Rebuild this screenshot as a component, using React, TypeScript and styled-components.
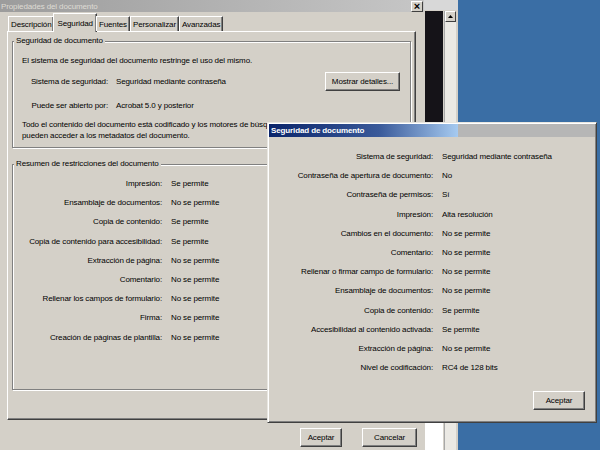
import { Fragment } from 'react';
import styled, { createGlobalStyle } from 'styled-components';

const GlobalStyle = createGlobalStyle`
  html, body {
    margin: 0;
    padding: 0;
  }
  body {
    font-family: 'Liberation Sans', Arial, sans-serif;
    font-size: 8px;
    letter-spacing: -0.12px;
    color: #000;
  }
`;

const summary = [
  ['Impresión:', 'Se permite'],
  ['Ensamblaje de documentos:', 'No se permite'],
  ['Copia de contenido:', 'Se permite'],
  ['Copia de contenido para accesibilidad:', 'Se permite'],
  ['Extracción de página:', 'No se permite'],
  ['Comentario:', 'No se permite'],
  ['Rellenar los campos de formulario:', 'No se permite'],
  ['Firma:', 'No se permite'],
  ['Creación de páginas de plantilla:', 'No se permite'],
];

const details = [
  ['Sistema de seguridad:', 'Seguridad mediante contraseña'],
  ['Contraseña de apertura de documento:', 'No'],
  ['Contraseña de permisos:', 'Sí'],
  ['Impresión:', 'Alta resolución'],
  ['Cambios en el documento:', 'No se permite'],
  ['Comentario:', 'No se permite'],
  ['Rellenar o firmar campo de formulario:', 'No se permite'],
  ['Ensamblaje de documentos:', 'No se permite'],
  ['Copia de contenido:', 'Se permite'],
  ['Accesibilidad al contenido activada:', 'Se permite'],
  ['Extracción de página:', 'No se permite'],
  ['Nivel de codificación:', 'RC4 de 128 bits'],
];

const tabs = ['Descripción', 'Seguridad', 'Fuentes', 'Personalizar', 'Avanzadas'];

const App = () => {
  return (
    <Desktop>
      <GlobalStyle />
      <MainWindow>
        <TitleBar>
          <span>Propiedades del documento</span>
          <CloseButton>×</CloseButton>
        </TitleBar>
        <TabStrip>
          {tabs.map((t) => (
            <Tab key={t} $selected={t === 'Seguridad'}>
              {t}
            </Tab>
          ))}
        </TabStrip>
        <Panel>
          <Group $height={107}>
            <Legend>Seguridad de documento</Legend>
            <Intro>El sistema de seguridad del documento restringe el uso del mismo.</Intro>
            <InfoRow $top={6}>
              <InfoLabel>Sistema de seguridad:</InfoLabel>
              <span>Seguridad mediante contraseña</span>
              <DetailsButton>Mostrar detalles...</DetailsButton>
            </InfoRow>
            <InfoRow $top={9}>
              <InfoLabel>Puede ser abierto por:</InfoLabel>
              <span>Acrobat 5.0 y posterior</span>
            </InfoRow>
            <Note>
              Todo el contenido del documento está codificado y los motores de búsqueda
              <br />
              pueden acceder a los metadatos del documento.
            </Note>
          </Group>
          <Group $height={226} $gap={11}>
            <Legend>Resumen de restricciones del documento</Legend>
            <SummaryGrid>
              {summary.map(([k, v]) => (
                <Fragment key={k}>
                  <SummaryLabel>{k}</SummaryLabel>
                  <span>{v}</span>
                </Fragment>
              ))}
            </SummaryGrid>
          </Group>
        </Panel>
        <ButtonRow>
          <PushButton $width={42}>Aceptar</PushButton>
          <PushButton $width={55}>Cancelar</PushButton>
        </ButtonRow>
      </MainWindow>

      <BackWindow>
        <BackTitle />
        <BackBody>
          <BlackPane>
            <DarkArea />
          </BlackPane>
          <ScrollTrack>
            <ArrowButton>
              <svg width="5" height="3" viewBox="0 0 5 3">
                <path d="M0 3 L2.5 0 L5 3 Z" fill="#000" />
              </svg>
            </ArrowButton>
          </ScrollTrack>
        </BackBody>
      </BackWindow>

      <Dialog>
        <DialogTitle>Seguridad de documento</DialogTitle>
        <DetailsGrid>
          {details.map(([k, v]) => (
            <Fragment key={k}>
              <DetailsLabel>{k}</DetailsLabel>
              <span>{v}</span>
            </Fragment>
          ))}
        </DetailsGrid>
        <DialogFooter>
          <PushButton $width={52}>Aceptar</PushButton>
        </DialogFooter>
      </Dialog>
    </Desktop>
  );
};

const Desktop = styled.div`
  position: relative;
  width: 600px;
  height: 450px;
  overflow: hidden;
  background: #3a6ea5;
`;

const MainWindow = styled.div`
  position: absolute;
  left: 0;
  top: 0;
  width: 424px;
  height: 470px;
  background: #d4d0c8;
  display: flex;
  flex-direction: column;
`;

const TitleBar = styled.div`
  height: 12px;
  display: flex;
  align-items: center;
  justify-content: space-between;
  padding: 0 1px 0 1px;
  background: linear-gradient(to right, #9c9c9c, #c6c6c6);
  color: #dedbd4;
  font-size: 8px;
`;

const CloseButton = styled.div`
  width: 10px;
  height: 9px;
  display: flex;
  align-items: center;
  justify-content: center;
  background: #d4d0c8;
  border: 1px solid;
  border-color: #fff #404040 #404040 #fff;
  color: #000;
  font-size: 11px;
  font-weight: bold;
  line-height: 9px;
`;

const TabStrip = styled.div`
  display: flex;
  align-items: flex-end;
  height: 17px;
  margin: 2px 0 0 8px;
  position: relative;
  z-index: 1;
`;

const Tab = styled.div<{ $selected?: boolean }>`
  height: 14px;
  padding: ${(p) => (p.$selected ? '0 3px' : '0 2px')};
  margin: ${(p) => (p.$selected ? '0 -1px -1px -1px' : '0')};
  display: flex;
  align-items: center;
  background: #d4d0c8;
  border: 1px solid;
  border-bottom: none;
  border-color: #fff #404040 transparent #fff;
  box-shadow: inset -1px 0 0 #808080;
  white-space: nowrap;
  ${(p) => (p.$selected ? 'height: 18px;' : '')}
`;

const Panel = styled.div`
  margin-left: 7px;
  width: 409px;
  height: 389px;
  box-sizing: border-box;
  border: 1px solid;
  border-color: #fff #404040 #404040 #fff;
  box-shadow: inset -1px -1px 0 #808080;
  display: flex;
  flex-direction: column;
  padding: 4px 0 0 4px;
`;

const Group = styled.fieldset<{ $height: number; $gap?: number }>`
  margin: ${(p) => p.$gap || 0}px 0 0 0;
  padding: 0;
  width: 399px;
  height: ${(p) => p.$height + 5}px;
  box-sizing: border-box;
  border: 1px solid #808080;
  box-shadow: inset 1px 1px 0 #fff, 1px 1px 0 #fff;
  min-width: 0;
  display: flex;
  flex-direction: column;
`;

const Legend = styled.legend`
  padding: 0 2px;
  margin-left: 1px;
  line-height: 10px;
  background: #d4d0c8;
`;

const Intro = styled.div`
  margin: 9px 0 0 9px;
  line-height: 11px;
`;

const InfoRow = styled.div<{ $top: number }>`
  display: flex;
  align-items: center;
  min-height: 11px;
  margin: ${(p) => p.$top}px 10px 0 0;
`;

const InfoLabel = styled.span`
  width: 95px;
  text-align: right;
  margin-right: 8px;
`;

const DetailsButton = styled.div`
  margin-left: auto;
  width: 75px;
  height: 19px;
  display: flex;
  align-items: center;
  justify-content: center;
  box-sizing: border-box;
  border: 1px solid;
  border-color: #fff #404040 #404040 #fff;
  box-shadow: inset -1px -1px 0 #808080;
`;

const Note = styled.div`
  margin: 8px 0 0 9px;
  line-height: 11px;
  white-space: nowrap;
`;

const SummaryGrid = styled.div`
  display: grid;
  grid-template-columns: 149px auto;
  column-gap: 9px;
  grid-auto-rows: 19.2px;
  align-items: center;
  margin-top: 5px;
`;

const SummaryLabel = styled.span`
  text-align: right;
  white-space: nowrap;
`;

const ButtonRow = styled.div`
  display: flex;
  justify-content: flex-end;
  gap: 20px;
  padding-right: 7px;
  margin-top: 8px;
`;

const PushButton = styled.div<{ $width: number }>`
  width: ${(p) => p.$width}px;
  height: 19px;
  box-sizing: border-box;
  display: flex;
  align-items: center;
  justify-content: center;
  background: #d4d0c8;
  border: 1px solid;
  border-color: #fff #404040 #404040 #fff;
  box-shadow: inset -1px -1px 0 #808080;
`;

const BackWindow = styled.div`
  position: absolute;
  left: 424px;
  top: 0;
  width: 34px;
  height: 450px;
  display: flex;
  flex-direction: column;
  background: #d4d0c8;
`;

const BackTitle = styled.div`
  height: 10px;
  background: #d8d8d8;
`;

const BackBody = styled.div`
  flex: 1;
  display: flex;
  padding: 1px 1px 0 1px;
  gap: 1px;
`;

const BlackPane = styled.div`
  width: 18px;
  background: #fff;
  display: flex;
  flex-direction: column;
`;

const DarkArea = styled.div`
  height: 400px;
  background: #151318;
`;

const ScrollTrack = styled.div`
  width: 11px;
  background: #ebe9e4;
  border-left: 1px solid #a8a8a8;
`;

const ArrowButton = styled.div`
  height: 9px;
  display: flex;
  align-items: center;
  justify-content: center;
  background: #d4d0c8;
  border: 1px solid;
  border-color: #fff #404040 #404040 #fff;
`;

const Dialog = styled.div`
  position: absolute;
  left: 267px;
  top: 122px;
  width: 330px;
  height: 301px;
  box-sizing: border-box;
  background: #d4d0c8;
  border: 1px solid;
  border-color: #e8e6e0 #404040 #404040 #e8e6e0;
  box-shadow: inset 1px 1px 0 #fff, inset -1px -1px 0 #808080;
  padding: 1px;
  display: flex;
  flex-direction: column;
`;

const DialogTitle = styled.div`
  height: 13px;
  display: flex;
  align-items: center;
  padding-left: 2px;
  background: linear-gradient(to right, #0a246a 0, #3a5a9a 110px, #a6caf0 189px, #b6b6b6 189px, #b6b6b6 100%);
  color: #fff;
  font-weight: bold;
`;

const DetailsGrid = styled.div`
  display: grid;
  grid-template-columns: 164px auto;
  column-gap: 9px;
  grid-auto-rows: 19.2px;
  align-items: center;
  margin-top: 10px;
`;

const DetailsLabel = styled.span`
  text-align: right;
  white-space: nowrap;
`;

const DialogFooter = styled.div`
  margin-top: auto;
  display: flex;
  justify-content: flex-end;
  padding: 0 10px 11px 0;
`;

export default App;
